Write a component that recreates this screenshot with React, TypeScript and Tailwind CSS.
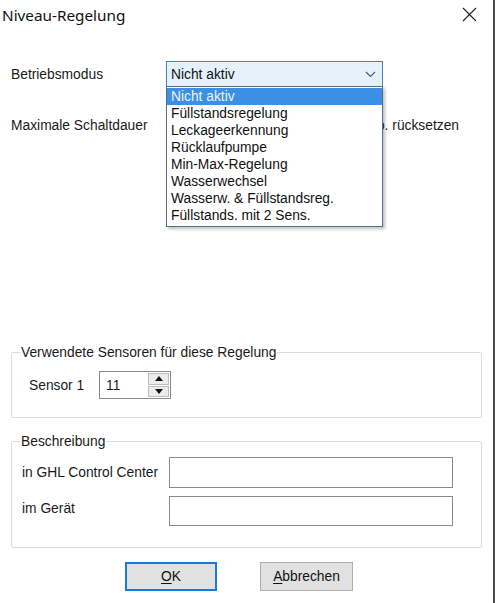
import React from 'react';

const options = [
  'Nicht aktiv',
  'Füllstandsregelung',
  'Leckageerkennung',
  'Rücklaufpumpe',
  'Min-Max-Regelung',
  'Wasserwechsel',
  'Wasserw. & Füllstandsreg.',
  'Füllstands. mit 2 Sens.',
];

const ui = "font-['Liberation_Sans',Arial,sans-serif] text-[13.8px] leading-[17px] text-[#1a1a1a]";

export default function App() {
  return (
    <div className={`relative h-[603px] w-[495px] overflow-hidden border-r-2 border-[#4a4a4a] bg-white ${ui}`}>
      {/* title bar */}
      <div className="flex h-[30px] items-center justify-between pl-[2px] pr-[16px]">
        <span className="font-['Noto_Sans',sans-serif] text-[15.3px] text-[#111]">Niveau-Regelung</span>
        <svg width="15" height="15" viewBox="0 0 15 15" className="mt-[-1px]">
          <path d="M1 1 L14 14 M14 1 L1 14" stroke="#222" strokeWidth="1.1" />
        </svg>
      </div>

      <div className="px-[11px]">
        <div className="mt-[31px] flex items-center">
          <span className="w-[155px]">Betriebsmodus</span>
          <div className="flex h-[26px] w-[217px] items-center justify-between border border-[#3f86c8] bg-[#e5f1fb] pl-[4px] pr-[6px]">
            <span className="text-[#111]">Nicht aktiv</span>
            <svg width="11" height="7" viewBox="0 0 11 7">
              <path d="M1 1 L5.5 5.5 L10 1" stroke="#555" strokeWidth="1.1" fill="none" />
            </svg>
          </div>
        </div>

        <div className="mt-[30px] flex items-center justify-between pr-[23px]">
          <span>Maximale Schaltdauer</span>
          <span>Zeit nach Temp. rücksetzen</span>
        </div>

        <fieldset className="mt-[210px] h-[74px] rounded-[2px] border border-[#dcdcdc] px-[17px]">
          <legend className="ml-[-9px] px-[1px]">Verwendete Sensoren für diese Regelung</legend>
          <div className="mt-[10px] flex items-center">
            <span className="w-[70px]">Sensor 1</span>
            <div className="flex h-[28px] w-[72px] items-center border border-[#8a8a8a] bg-white">
              <span className="flex-1 pl-[6px]">11</span>
              <div className="mr-[1px] flex h-[24px] w-[21px] flex-col gap-[1px]">
                <div className="flex flex-1 items-center justify-center border border-[#bdbdbd] bg-[#ececec]">
                  <svg width="8" height="5" viewBox="0 0 8 5"><path d="M0 5 L4 0 L8 5 Z" fill="#111" /></svg>
                </div>
                <div className="flex flex-1 items-center justify-center border border-[#bdbdbd] bg-[#ececec]">
                  <svg width="8" height="5" viewBox="0 0 8 5"><path d="M0 0 L4 5 L8 0 Z" fill="#111" /></svg>
                </div>
              </div>
            </div>
          </div>
        </fieldset>

        <fieldset className="mt-[15px] h-[115px] rounded-[2px] border border-[#dcdcdc] pl-[10px] pr-[28px]">
          <legend className="ml-[-2px] px-[1px]">Beschreibung</legend>
          <div className="mt-[7px] flex items-center">
            <span className="w-[147px]">in GHL Control Center</span>
            <div className="h-[31px] flex-1 border border-[#8a8a8a] bg-white" />
          </div>
          <div className="mt-[8px] flex items-start">
            <span className="mt-[4px] w-[147px]">im Gerät</span>
            <div className="h-[30px] flex-1 border border-[#8a8a8a] bg-white" />
          </div>
        </fieldset>

        <div className="mt-[14px] flex pl-[114px]">
          <button className="h-[29px] w-[92px] border-2 border-[#1a7bd6] bg-[#e1e1e1] text-[#111]">
            <span className="underline underline-offset-2">O</span>K
          </button>
          <button className="ml-[43px] h-[29px] w-[93px] border border-[#adadad] bg-[#e1e1e1] text-[#111]">
            <span className="underline underline-offset-2">A</span>bbrechen
          </button>
        </div>
      </div>

      {/* open dropdown list */}
      <div className="absolute left-[166px] top-[86px] w-[217px] border border-[#5a6f86] bg-white pb-[2px] pt-[1px] shadow-[2px_2px_3px_rgba(0,0,0,0.25)]">
        {options.map((o, i) => (
          <div
            key={o}
            className={`flex h-[17px] items-center pl-[4px] ${i === 0 ? 'bg-[#3b8fe5] text-[#eaf4ff]' : 'text-[#111]'}`}
          >
            {o}
          </div>
        ))}
      </div>
    </div>
  );
}
